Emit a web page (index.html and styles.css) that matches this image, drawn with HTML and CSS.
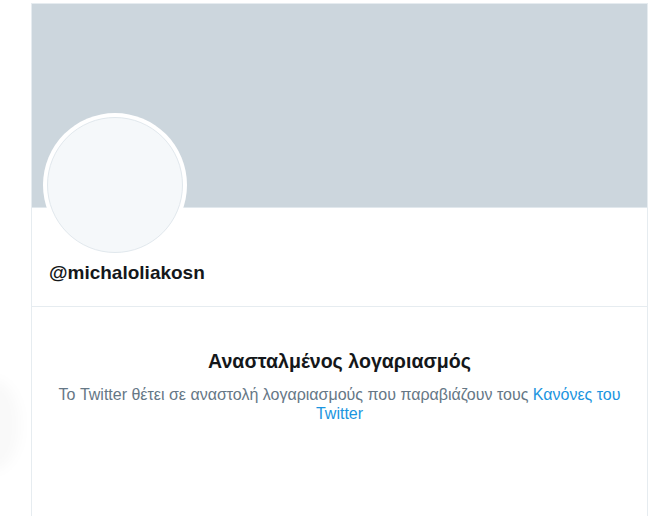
FILE: index.html
```html
<!DOCTYPE html>
<html lang="el">
<head>
<meta charset="utf-8">
<link rel="stylesheet" href="styles.css">
</head>
<body>
<div class="glow"></div>
<main class="column">
  <div class="banner"></div>
  <div class="profile">
    <div class="avatar"><div class="avatar-inner"></div></div>
    <div class="handle">@michaloliakosn</div>
  </div>
  <section class="notice">
    <h1 class="notice-title">Ανασταλμένος λογαριασμός</h1>
    <p class="notice-text">Το Twitter θέτει σε αναστολή λογαριασμούς που παραβιάζουν τους <a class="link" href="#">Κανόνες του Twitter</a></p>
  </section>
</main>
</body>
</html>
```
FILE: styles.css
```css
html, body {
  margin: 0;
  padding: 0;
  background: #ffffff;
  height: 100%;
  overflow: hidden;
}
body {
  font-family: "Liberation Sans", Arial, sans-serif;
  color: #14171a;
  padding-top: 3px;
  box-sizing: border-box;
}
.glow {
  position: absolute;
  left: -30px;
  top: 380px;
  width: 50px;
  height: 90px;
  border-radius: 50%;
  background: rgba(0,0,0,0.025);
  filter: blur(6px);
}
.column {
  margin-left: 31px;
  width: 617px;
  box-sizing: border-box;
  border-left: 1px solid #e6ecf0;
  border-right: 1px solid #e6ecf0;
  border-top: 1px solid #e6ecf0;
  height: 100%;
}
.banner {
  height: 203px;
  background: #ccd6dd;
  border-bottom: 1px solid #e1e8ed;
}
.profile {
  position: relative;
  padding: 53px 17px 21px;
  border-bottom: 1px solid #e6ecf0;
}
.avatar {
  position: absolute;
  left: 11px;
  top: -95px;
  width: 144px;
  height: 144px;
  border-radius: 50%;
  background: #ffffff;
  box-sizing: border-box;
  padding: 4px;
}
.avatar-inner {
  width: 100%;
  height: 100%;
  box-sizing: border-box;
  border-radius: 50%;
  background: #f5f8fa;
  border: 1px solid #e1e8ed;
}
.handle {
  font-weight: bold;
  font-size: 19px;
  line-height: 24px;
}
.notice {
  text-align: center;
  padding: 41px 20px 0;
}
.notice-title {
  margin: 0 0 11px;
  font-size: 19.6px;
  line-height: 26px;
  font-weight: bold;
}
.notice-text {
  margin: 0;
  font-size: 16px;
  line-height: 19px;
  color: #657786;
}
.link {
  color: #1b95e0;
  text-decoration: none;
}
```
